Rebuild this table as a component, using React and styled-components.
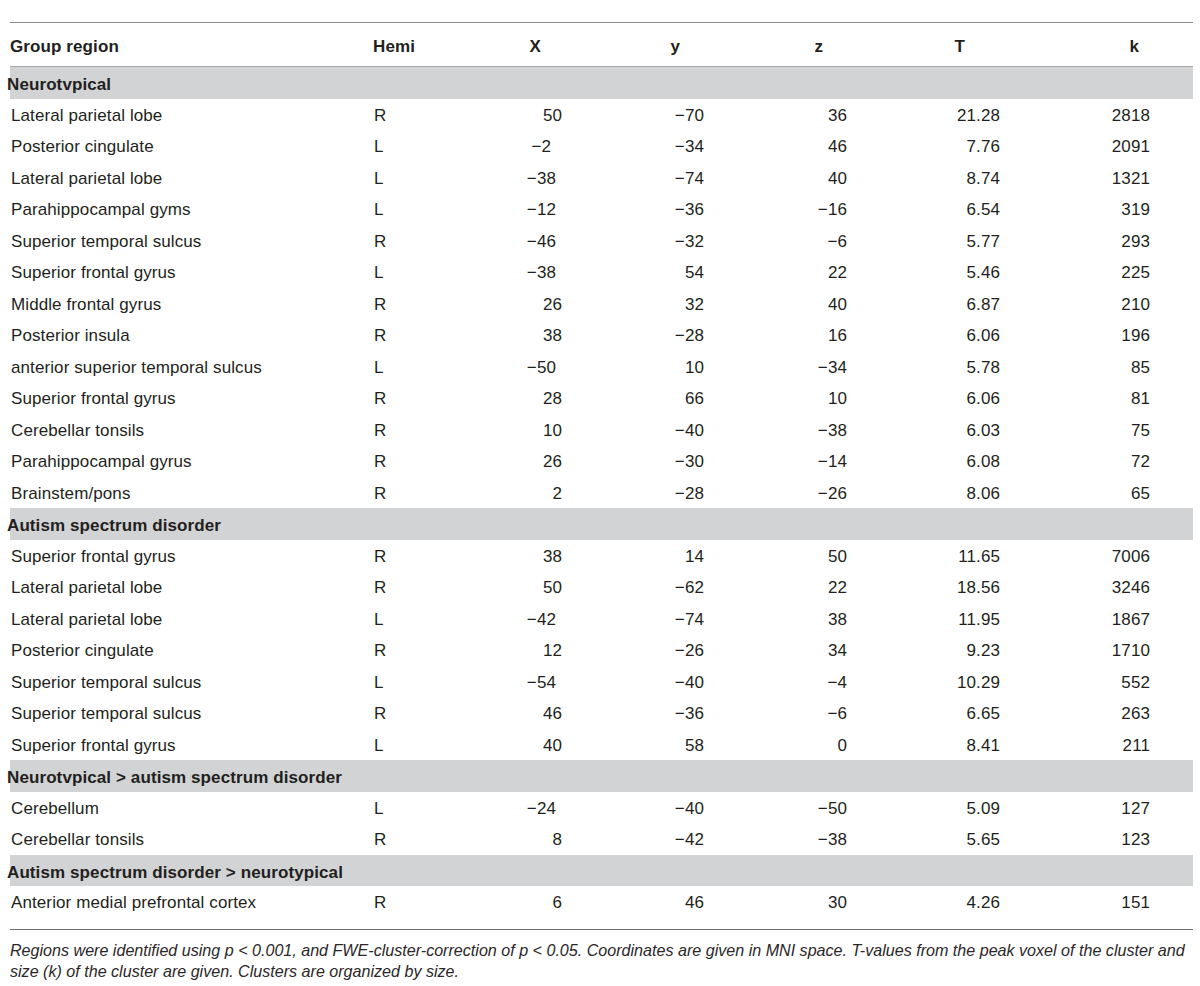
import React from "react";
import styled, { createGlobalStyle } from "styled-components";

const Global = createGlobalStyle`
  html, body { margin: 0; padding: 0; background: #ffffff; }
  body {
    font-family: "Liberation Sans", Arial, Helvetica, sans-serif;
    color: #231f20;
  }
`;

const COLS = "363px 120px 69px 142px 143px 153px 150px 1fr";

const Page = styled.div`
  width: 1183px;
  padding: 22px 0 0 10px;
`;

const TopRule = styled.div`
  height: 1px;
  background: #8c8c8c;
`;

const Row = styled.div`
  display: grid;
  grid-template-columns: ${COLS};
  align-items: center;
  box-sizing: border-box;
  height: 31.5px;
  padding-top: 3px;
  font-size: 17px;
  letter-spacing: 0.1px;
`;

const HeaderRow = styled(Row)`
  height: 44px;
  padding-top: 5px;
  font-weight: 700;
  border-bottom: 1px solid #a8a8a8;
`;

const SectionRow = styled.div`
  box-sizing: border-box;
  height: 31.5px;
  padding-top: 5px;
  display: flex;
  align-items: center;
  background: #d1d3d4;
`;

const SectionLabel = styled.span`
  margin-left: -3px;
  font-size: 17px;
  font-weight: 700;
  letter-spacing: 0.1px;
`;

const Cell = styled.div`
  white-space: nowrap;
  text-align: ${(p) => (p.$num ? "right" : "left")};
  padding-right: ${(p) => p.$shift || 0}px;
  padding-left: ${(p) => p.$indent || 0}px;
`;

const BottomRule = styled.div`
  margin-top: 11px;
  height: 1px;
  background: #6e6e6e;
`;

const Note = styled.p`
  margin: 0;
  padding-top: 10px;
  font-size: 16.1px;
  line-height: 21px;
  font-style: italic;
  color: #2b2728;
`;

const M = "\u2212";

const groups = [
  {
    title: "Neurotvpical",
    rows: [
      ["Lateral parietal lobe", "R", "50", `${M}70`, "36", "21.28", "2818"],
      ["Posterior cingulate", "L", `${M}2`, `${M}34`, "46", "7.76", "2091"],
      ["Lateral parietal lobe", "L", `${M}38`, `${M}74`, "40", "8.74", "1321"],
      ["Parahippocampal gyms", "L", `${M}12`, `${M}36`, `${M}16`, "6.54", "319"],
      ["Superior temporal sulcus", "R", `${M}46`, `${M}32`, `${M}6`, "5.77", "293"],
      ["Superior frontal gyrus", "L", `${M}38`, "54", "22", "5.46", "225"],
      ["Middle frontal gyrus", "R", "26", "32", "40", "6.87", "210"],
      ["Posterior insula", "R", "38", `${M}28`, "16", "6.06", "196"],
      ["anterior superior temporal sulcus", "L", `${M}50`, "10", `${M}34`, "5.78", "85"],
      ["Superior frontal gyrus", "R", "28", "66", "10", "6.06", "81"],
      ["Cerebellar tonsils", "R", "10", `${M}40`, `${M}38`, "6.03", "75"],
      ["Parahippocampal gyrus", "R", "26", `${M}30`, `${M}14`, "6.08", "72"],
      ["Brainstem/pons", "R", "2", `${M}28`, `${M}26`, "8.06", "65"],
    ],
  },
  {
    title: "Autism spectrum disorder",
    rows: [
      ["Superior frontal gyrus", "R", "38", "14", "50", "11.65", "7006"],
      ["Lateral parietal lobe", "R", "50", `${M}62`, "22", "18.56", "3246"],
      ["Lateral parietal lobe", "L", `${M}42`, `${M}74`, "38", "11.95", "1867"],
      ["Posterior cingulate", "R", "12", `${M}26`, "34", "9.23", "1710"],
      ["Superior temporal sulcus", "L", `${M}54`, `${M}40`, `${M}4`, "10.29", "552"],
      ["Superior temporal sulcus", "R", "46", `${M}36`, `${M}6`, "6.65", "263"],
      ["Superior frontal gyrus", "L", "40", "58", "0", "8.41", "211"],
    ],
  },
  {
    title: "Neurotvpical > autism spectrum disorder",
    rows: [
      ["Cerebellum", "L", `${M}24`, `${M}40`, `${M}50`, "5.09", "127"],
      ["Cerebellar tonsils", "R", "8", `${M}42`, `${M}38`, "5.65", "123"],
    ],
  },
  {
    title: "Autism spectrum disorder > neurotypical",
    rows: [["Anterior medial prefrontal cortex", "R", "6", "46", "30", "4.26", "151"]],
  },
];

const xShift = (v) => {
  if (!v.startsWith(M)) return 0;
  return v.length === 2 ? 11 : 6;
};

export default function App() {
  return (
    <Page>
      <Global />
      <TopRule />
      <HeaderRow>
        <Cell>Group region</Cell>
        <Cell>Hemi</Cell>
        <Cell $num $shift={21}>X</Cell>
        <Cell $num $shift={24}>y</Cell>
        <Cell $num $shift={24}>z</Cell>
        <Cell $num $shift={35}>T</Cell>
        <Cell $num $shift={11}>k</Cell>
        <Cell />
      </HeaderRow>
      {groups.map((g) => (
        <React.Fragment key={g.title}>
          <SectionRow>
            <SectionLabel>{g.title}</SectionLabel>
          </SectionRow>
          {g.rows.map((r, i) => (
            <Row key={i}>
              <Cell $indent={1}>{r[0]}</Cell>
              <Cell $indent={1}>{r[1]}</Cell>
              <Cell $num $shift={xShift(r[2])}>{r[2]}</Cell>
              <Cell $num>{r[3]}</Cell>
              <Cell $num>{r[4]}</Cell>
              <Cell $num>{r[5]}</Cell>
              <Cell $num>{r[6]}</Cell>
              <Cell />
            </Row>
          ))}
        </React.Fragment>
      ))}
      <BottomRule />
      <Note>
        Regions were identified using p &lt; 0.001, and FWE-cluster-correction of p &lt; 0.05. Coordinates are given in MNI space. T-values from the peak voxel of the cluster and
        <br />
        size (k) of the cluster are given. Clusters are organized by size.
      </Note>
    </Page>
  );
}
